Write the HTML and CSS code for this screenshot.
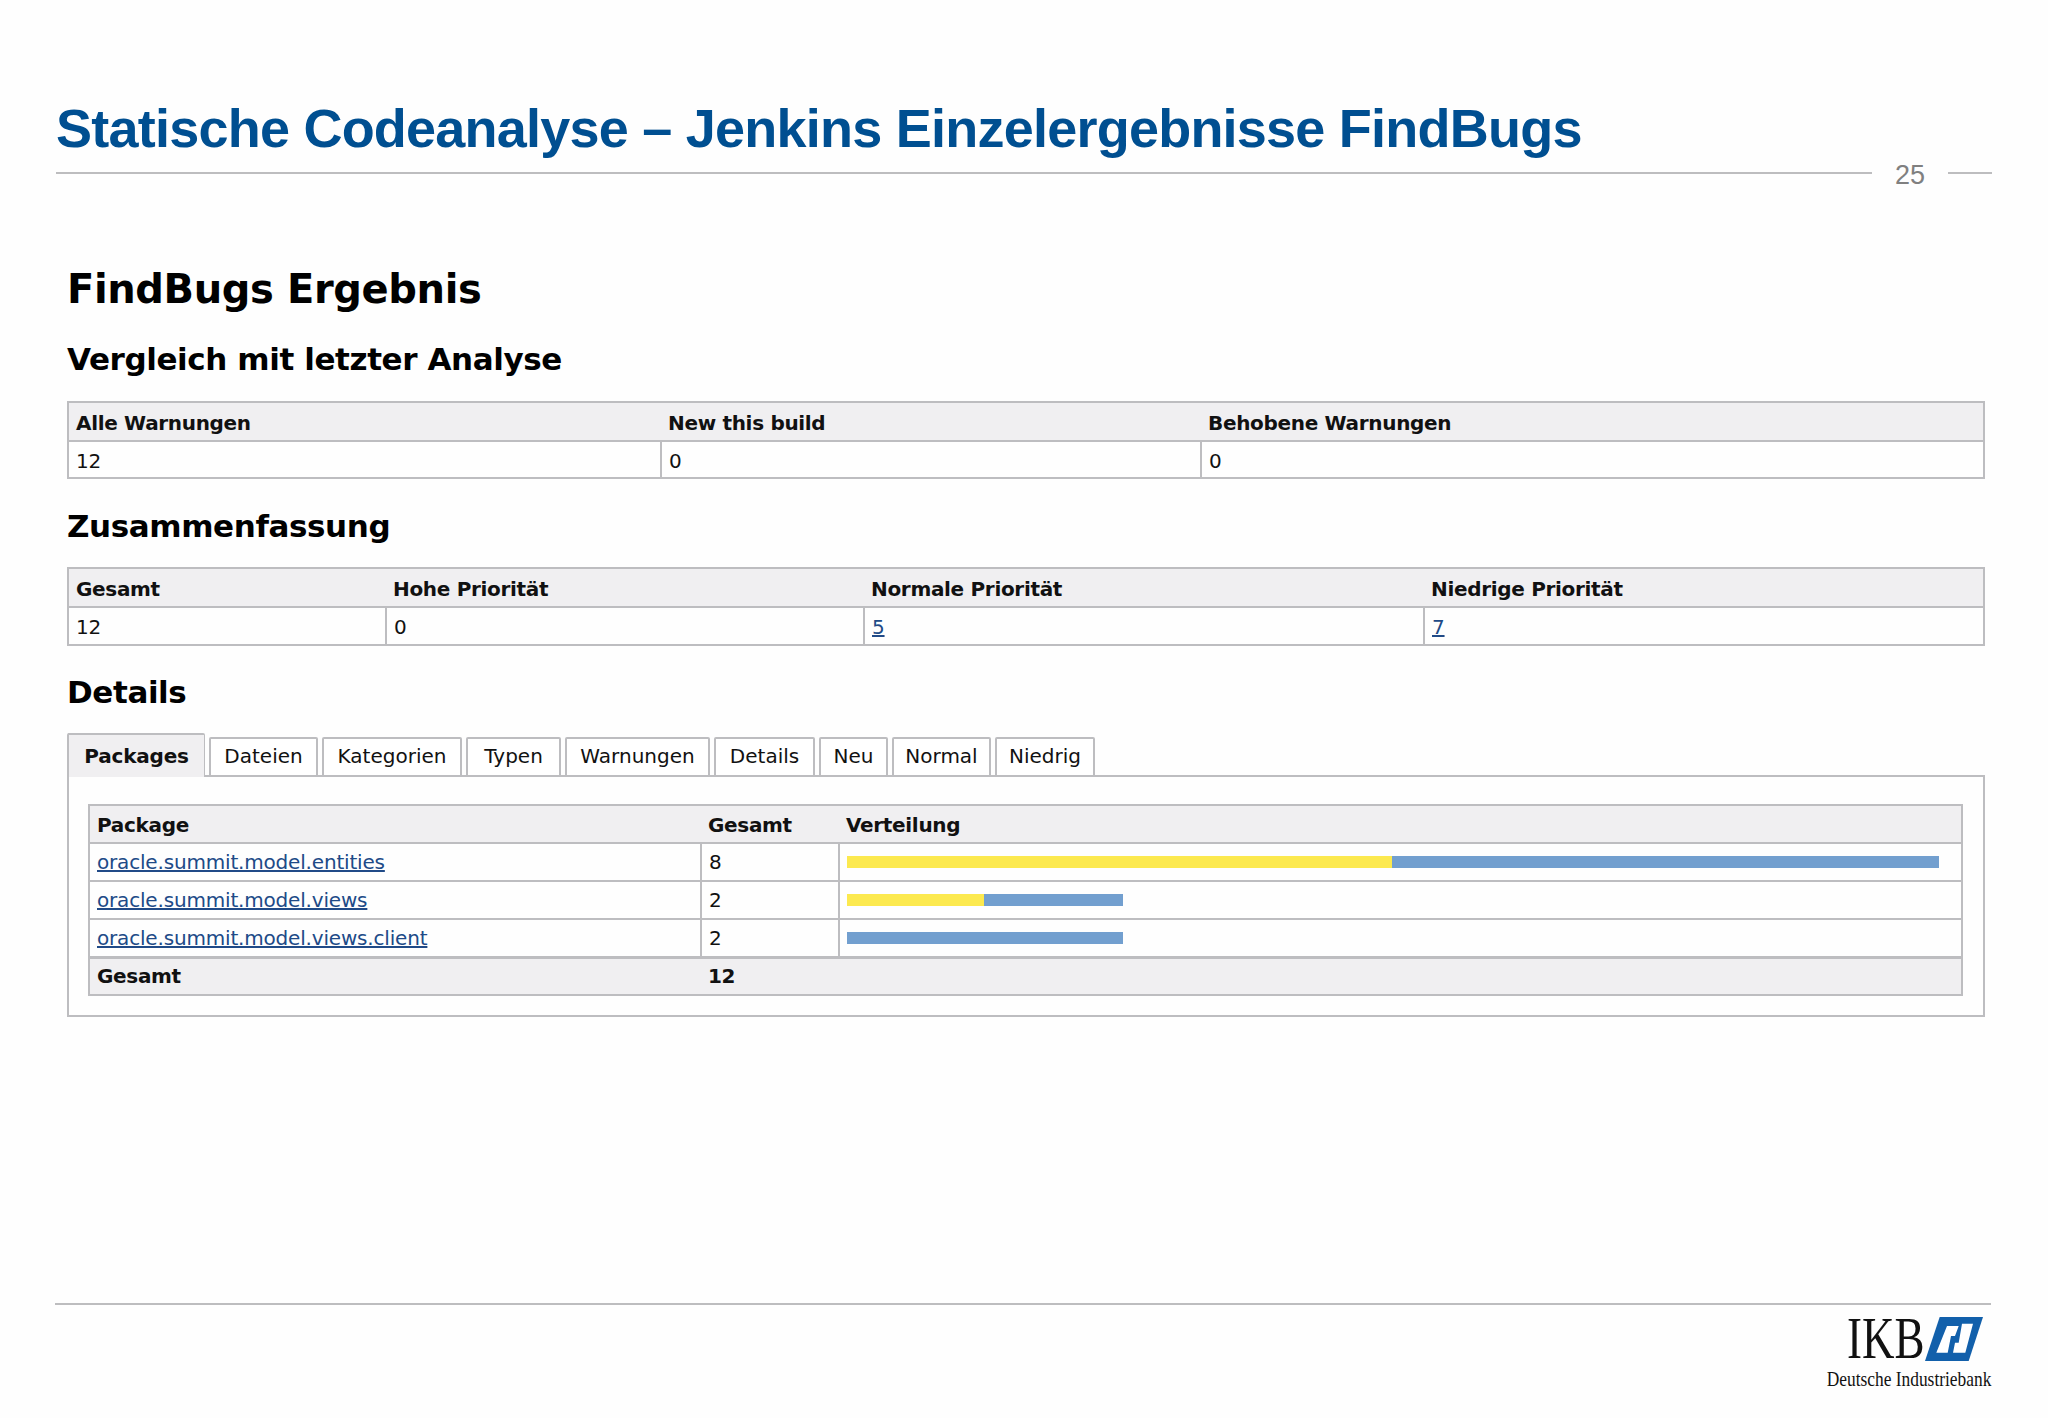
FILE: index.html
```html
<!DOCTYPE html>
<html lang="de">

<head>
    <meta charset="UTF-8">
    <title>Statische Codeanalyse</title>
    <link rel="stylesheet" href="styles.css">
</head>

<body>
    <div class="slide">
        <header class="slide-head">
            <h1 class="slide-title">Statische Codeanalyse – Jenkins Einzelergebnisse FindBugs</h1>
            <div class="slide-rule">
                <span class="rule-long"></span>
                <span class="page-no">25</span>
                <span class="rule-short"></span>
            </div>
        </header>

        <main class="report">
            <h1 class="report-title">FindBugs Ergebnis</h1>

            <h2 class="section-title first">Vergleich mit letzter Analyse</h2>
            <table class="pane compare">
                <tr>
                    <th>Alle Warnungen</th>
                    <th>New this build</th>
                    <th>Behobene Warnungen</th>
                </tr>
                <tr>
                    <td>12</td>
                    <td>0</td>
                    <td>0</td>
                </tr>
            </table>

            <h2 class="section-title">Zusammenfassung</h2>
            <table class="pane summary">
                <tr>
                    <th>Gesamt</th>
                    <th>Hohe Priorität</th>
                    <th>Normale Priorität</th>
                    <th>Niedrige Priorität</th>
                </tr>
                <tr>
                    <td>12</td>
                    <td>0</td>
                    <td><a href="#">5</a></td>
                    <td><a href="#">7</a></td>
                </tr>
            </table>

            <h2 class="section-title details-title">Details</h2>
            <div class="tabs">
                <span class="tab active">Packages</span>
                <span class="tab tab-dateien">Dateien</span>
                <span class="tab tab-kategorien">Kategorien</span>
                <span class="tab tab-typen">Typen</span>
                <span class="tab tab-warnungen">Warnungen</span>
                <span class="tab tab-details">Details</span>
                <span class="tab tab-neu">Neu</span>
                <span class="tab tab-normal">Normal</span>
                <span class="tab tab-niedrig">Niedrig</span>
            </div>
            <div class="tab-panel">
                <table class="pane packages">
                    <tr>
                        <th>Package</th>
                        <th>Gesamt</th>
                        <th>Verteilung</th>
                    </tr>
                    <tr>
                        <td><a href="#">oracle.summit.model.entities</a></td>
                        <td>8</td>
                        <td>
                            <div class="bar">
                                <span class="normal" style="width: 545px"></span>
                                <span class="low" style="width: 547px"></span>
                            </div>
                        </td>
                    </tr>
                    <tr>
                        <td><a href="#">oracle.summit.model.views</a></td>
                        <td>2</td>
                        <td>
                            <div class="bar">
                                <span class="normal" style="width: 137px"></span>
                                <span class="low" style="width: 139px"></span>
                            </div>
                        </td>
                    </tr>
                    <tr>
                        <td><a href="#">oracle.summit.model.views.client</a></td>
                        <td>2</td>
                        <td>
                            <div class="bar">
                                <span class="low" style="width: 276px"></span>
                            </div>
                        </td>
                    </tr>
                    <tr class="total">
                        <td>Gesamt</td>
                        <td>12</td>
                        <td></td>
                    </tr>
                </table>
            </div>
        </main>

        <footer class="slide-foot">
            <div class="logo">
                <div class="logo-top">
                    <span class="logo-name">IKB</span>
                    <svg class="logo-mark" width="58" height="44" viewBox="0 0 58 44">
                        <path fill="#1260ab" d="M14.7 0H58L43.7 44H0Z" />
                        <path fill="#fff" d="M22 9H33.7L30 19H26L22.7 35.7H11.3Z" />
                        <path fill="#fff" d="M37 6.7H48L40.3 35.7H28L30 25.7H33.7Z" />
                    </svg>
                </div>
                <div class="logo-sub">Deutsche Industriebank</div>
            </div>
        </footer>
    </div>
</body>

</html>
```

FILE: styles.css
```css
* {
    box-sizing: border-box;
}

body {
    margin: 0;
    background-color: #fefefe;
}

.slide {
    width: 2048px;
    height: 1418px;
    padding: 0 56px;
    display: flex;
    flex-direction: column;
}

/* slide header */
.slide-head {
    padding-top: 96px;
}

.slide-title {
    margin: 0;
    height: 68px;
    font-family: "Liberation Sans", sans-serif;
    font-size: 54px;
    line-height: 64px;
    font-weight: bold;
    letter-spacing: -0.77px;
    color: #004f91;
}

.slide-rule {
    display: flex;
    align-items: center;
    height: 18px;
}

.rule-long,
.rule-short {
    height: 2px;
    background-color: #bdbdbf;
}

.rule-long {
    width: 1816px;
}

.rule-short {
    width: 44px;
}

.page-no {
    width: 76px;
    text-align: center;
    font-family: "Liberation Sans", sans-serif;
    font-size: 27px;
    line-height: 18px;
    color: #808080;
    position: relative;
    top: 2px;
}

/* jenkins report */
.report {
    padding: 81px 7px 0 11px;
    font-family: "DejaVu Sans", sans-serif;
    font-size: 20px;
    color: #111;
}

.report-title {
    margin: 0;
    font-size: 40px;
    line-height: 52px;
    font-weight: bold;
    letter-spacing: -0.38px;
    color: #000;
}

.section-title {
    margin: 26px 0 20px 0;
    font-size: 31px;
    line-height: 42px;
    font-weight: bold;
    letter-spacing: -0.4px;
    color: #000;
}

.section-title.first {
    margin-top: 23px;
    margin-bottom: 21px;
}

.section-title.details-title {
    margin-top: 25px;
}

.pane {
    width: 100%;
    table-layout: fixed;
    border-collapse: collapse;
    border: 2px solid #bdbdc0;
}

.pane th,
.pane td {
    height: 38px;
    padding: 2px 7px 0 7px;
    font-size: 20px;
    line-height: 24px;
    letter-spacing: -0.18px;
    text-align: left;
    border: 2px solid #bdbdc0;
}

.pane th {
    background-color: #f0eff1;
    font-weight: bold;
    letter-spacing: -0.32px;
    border-left: none;
    border-right: none;
}

.pane a {
    color: #204a87;
}

.compare th,
.summary th {
    height: 39px;
}

.compare td {
    height: 37px;
}

.compare th:nth-child(1) {
    width: 593px;
}

.compare th:nth-child(2) {
    width: 540px;
}

.summary th:nth-child(1) {
    width: 318px;
}

.summary th:nth-child(2) {
    width: 478px;
}

.summary th:nth-child(3) {
    width: 560px;
}

/* tabs */
.tabs {
    display: flex;
    align-items: flex-end;
    height: 44px;
    margin-top: 20px;
    position: relative;
    z-index: 1;
}

.tab {
    height: 40px;
    margin-right: 4px;
    border: 2px solid #bdbdc0;
    border-radius: 2px 2px 0 0;
    background-color: #fff;
    font-size: 20px;
    line-height: 34px;
    text-align: center;
}

.tab.active {
    width: 138px;
    height: 44px;
    line-height: 42px;
    font-weight: bold;
    letter-spacing: -0.2px;
    background-color: #f0eff1;
    border-bottom: none;
    border-right-width: 1px;
}

.tab-dateien { width: 109px; }
.tab-kategorien { width: 140px; }
.tab-typen { width: 95px; }
.tab-warnungen { width: 145px; }
.tab-details { width: 101px; }
.tab-neu { width: 69px; }
.tab-normal { width: 99px; }
.tab-niedrig { width: 100px; }

.tab-panel {
    border: 2px solid #bdbdc0;
    margin-top: -2px;
    padding: 27px 20px 19px 19px;
    background-color: #fefefe;
}

.packages th:nth-child(1) {
    width: 612px;
}

.packages th:nth-child(2) {
    width: 138px;
}

.packages td {
    padding-top: 0;
}

.packages .total td {
    height: 38px;
    font-weight: bold;
    letter-spacing: -0.32px;
    background-color: #f0eff1;
    border-left: none;
    border-right: none;
    border-top-width: 3px;
}

.bar {
    display: flex;
    height: 12px;
}

.bar span {
    display: block;
    height: 12px;
}

.bar .normal {
    background-color: #fce94f;
}

.bar .low {
    background-color: #729fcf;
}

/* slide footer */
.slide-foot {
    margin-top: auto;
    margin-bottom: 26px;
    margin-right: 1px;
    margin-left: -1px;
    border-top: 2px solid #bdbdbf;
    display: flex;
    justify-content: flex-end;
}

.logo {
    padding-top: 10px;
    display: flex;
    flex-direction: column;
    align-items: flex-end;
    font-family: "Liberation Serif", serif;
    color: #111;
}

.logo-top {
    display: flex;
    align-items: flex-end;
    margin-right: 8px;
    height: 46px;
}

.logo-name {
    font-size: 60px;
    line-height: 46px;
    display: inline-block;
    width: 78px;
    white-space: nowrap;
    transform: scaleX(0.75);
    transform-origin: left center;
}

.logo-sub {
    margin-top: 5px;
    font-size: 22px;
    line-height: 26px;
    white-space: nowrap;
    transform: scaleX(0.79);
    transform-origin: right center;
}
```
